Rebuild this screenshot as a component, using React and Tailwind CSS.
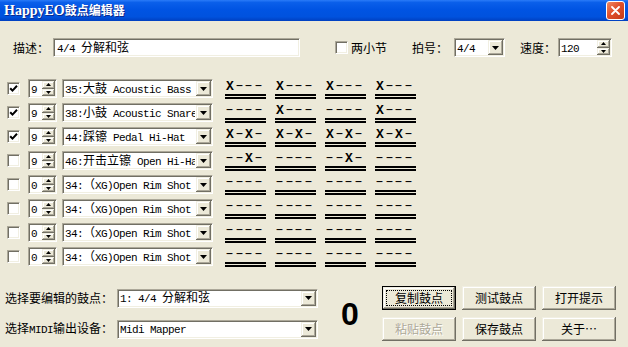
import React from "react";

const CJK_SPLIT = /([\u2000-\u206f\u3000-\u303f\u4e00-\u9fff\uff00-\uffef]+)/;
const CJK_TEST = /[\u2000-\u206f\u3000-\u303f\u4e00-\u9fff\uff00-\uffef]/;
const cjk = "font-['Noto_Sans_CJK_SC',sans-serif] text-[12px]";
const mono = "font-['Liberation_Mono',monospace] text-[11px] tracking-[-0.6px]";

const sunken =
  "bg-white border border-t-[#aca899] border-l-[#aca899] border-r-white border-b-white shadow-[inset_1px_1px_0_#716f64,inset_-1px_-1px_0_#f1efe2]";
const raised =
  "bg-[#ece9d8] shadow-[inset_-1px_-1px_0_#716f64,inset_1px_1px_0_#f1efe2,inset_-2px_-2px_0_#aca899,inset_2px_2px_0_#ffffff]";

function Mixed({ text }) {
  return (
    <span className="whitespace-pre">
      {text
        .split(CJK_SPLIT)
        .filter(Boolean)
        .map((s, i) =>
          CJK_TEST.test(s) ? (
            <span key={i} className={cjk}>
              {s}
            </span>
          ) : (
            <span key={i} className={mono}>
              {s}
            </span>
          )
        )}
    </span>
  );
}

function DownTri() {
  return (
    <svg width="7" height="4" viewBox="0 0 7 4">
      <path d="M0 0 H7 L3.5 4 Z" fill="black" />
    </svg>
  );
}
function UpTri() {
  return (
    <svg width="5" height="3" viewBox="0 0 5 3">
      <path d="M0 3 H5 L2.5 0 Z" fill="black" />
    </svg>
  );
}
function DnTri() {
  return (
    <svg width="5" height="3" viewBox="0 0 5 3">
      <path d="M0 0 H5 L2.5 3 Z" fill="black" />
    </svg>
  );
}

function Combo({ text, className }) {
  return (
    <div className={`${sunken} flex overflow-hidden ${className}`}>
      <div className="flex-1 min-w-0 overflow-hidden flex items-center pl-[2px] leading-none">
        <Mixed text={text} />
      </div>
      <div className={`${raised} w-[15px] m-[1px] flex items-center justify-center shrink-0`}>
        <DownTri />
      </div>
    </div>
  );
}

function Spin({ text, className }) {
  return (
    <div className={`${sunken} flex overflow-hidden ${className}`}>
      <div className="flex-1 min-w-0 overflow-hidden flex items-center pl-[2px] leading-none">
        <Mixed text={text} />
      </div>
      <div className="w-[13px] m-[1px] flex flex-col shrink-0">
        <div className={`${raised} flex-1 flex items-center justify-center`}>
          <UpTri />
        </div>
        <div className={`${raised} flex-1 flex items-center justify-center`}>
          <DnTri />
        </div>
      </div>
    </div>
  );
}

function Check({ checked }) {
  return (
    <div className={`${sunken} w-[13px] h-[13px] flex items-center justify-center`}>
      {checked && (
        <svg width="9" height="9" viewBox="0 0 9 9">
          <path d="M1.2 4.2 L3.5 6.6 L8 1.8" stroke="black" strokeWidth="2" fill="none" />
        </svg>
      )}
    </div>
  );
}

function Cell({ p }) {
  return (
    <div className="w-[41px] flex flex-col">
      <div className="h-[15px] flex font-['Liberation_Mono',monospace] text-[12px] leading-[15px] text-black">
        {p.split("").map((c, i) =>
          c === "X" ? (
            <span key={i} className="w-[9.6px] text-center font-bold text-[13px]">
              X
            </span>
          ) : (
            <span key={i} className="w-[9.6px] text-center">
              <span className="inline-block scale-x-[1.8]">-</span>
            </span>
          )
        )}
      </div>
      <div className="h-[2px] bg-black" />
      <div className="h-[1px]" />
      <div className="h-[2px] bg-black" />
    </div>
  );
}

function Btn({ label, def, disabled }) {
  if (def) {
    return (
      <div className="w-[74px] h-[24px] border border-black flex">
        <div className={`${raised} flex-1 flex p-[3px]`}>
          <div className="flex-1 border border-dotted border-black flex items-center justify-center">
            {label}
          </div>
        </div>
      </div>
    );
  }
  return (
    <div
      className={`${raised} w-[74px] h-[24px] flex items-center justify-center ${
        disabled ? "text-[#aca899] [text-shadow:1px_1px_0_#ffffff]" : ""
      }`}
    >
      {label}
    </div>
  );
}

const tracks = [
  { c: true, n: "9", name: "35:大鼓 Acoustic Bass" },
  { c: true, n: "9", name: "38:小鼓 Acoustic Snare" },
  { c: true, n: "9", name: "44:踩镲 Pedal Hi-Hat" },
  { c: false, n: "9", name: "46:开击立镲 Open Hi-Hat" },
  { c: false, n: "0", name: "34:（XG)Open Rim Shot" },
  { c: false, n: "0", name: "34:（XG)Open Rim Shot" },
  { c: false, n: "0", name: "34:（XG)Open Rim Shot" },
  { c: false, n: "0", name: "34:（XG)Open Rim Shot" },
];

const patterns = [
  ["X---", "X---", "X---", "X---"],
  ["----", "X---", "----", "X---"],
  ["X-X-", "X-X-", "X-X-", "X-X-"],
  ["--X-", "----", "--X-", "----"],
  ["----", "----", "----", "----"],
  ["----", "----", "----", "----"],
  ["----", "----", "----", "----"],
  ["----", "----", "----", "----"],
];

export default function App() {
  return (
    <div className="w-[628px] h-[347px] overflow-hidden bg-[#ece9d8] text-black font-['Noto_Sans_CJK_SC',sans-serif] text-[12px]">
      {/* Title bar */}
      <div className="h-[21px] flex items-center justify-between pl-[4px] pr-[3px] bg-[linear-gradient(to_bottom,#2a7bf8_0%,#0a5fea_12%,#0054e3_45%,#0052de_80%,#003fc0_100%)]">
        <div className="text-white font-bold whitespace-pre leading-none [text-shadow:1px_1px_0_#0b2a8c]">
          <span className="font-['Liberation_Serif',serif] text-[14px]">HappyEO</span>
          <span className="font-['Noto_Sans_CJK_SC',sans-serif] text-[12px]">鼓点编辑器</span>
        </div>
        <div className="w-[19px] h-[19px] rounded-[3px] border border-white bg-[linear-gradient(135deg,#f08a64_0%,#e0502c_45%,#c43a17_100%)] flex items-center justify-center">
          <svg width="9" height="9" viewBox="0 0 9 9">
            <path d="M1 1 L8 8 M8 1 L1 8" stroke="white" strokeWidth="1.8" strokeLinecap="round" />
          </svg>
        </div>
      </div>

      {/* Top row */}
      <div className="flex items-center h-[19px] mt-[17px]">
        <span className="ml-[13px] w-[40px]">描述：</span>
        <div className={`${sunken} w-[247px] h-[19px] flex items-center pl-[3px] leading-none`}>
          <Mixed text="4/4 分解和弦" />
        </div>
        <div className="ml-[35px]">
          <Check checked={false} />
        </div>
        <span className="ml-[3px] w-[61px]">两小节</span>
        <span className="w-[42px]">拍号：</span>
        <Combo text="4/4" className="w-[51px] h-[19px]" />
        <span className="ml-[15px] w-[38px]">速度：</span>
        <Spin text="120" className="w-[54px] h-[19px]" />
      </div>

      {/* Tracks */}
      <div className="mt-[22px] flex flex-col">
        {tracks.map((t, i) => (
          <div key={i} className="h-[24px] flex items-start">
            <div className="ml-[7px] mt-[3px]">
              <Check checked={t.c} />
            </div>
            <Spin text={t.n} className="ml-[8px] w-[29px] h-[19px]" />
            <Combo text={t.name} className="ml-[5px] w-[151px] h-[19px]" />
            <div className="ml-[12px] flex gap-[9px]">
              {patterns[i].map((p, j) => (
                <Cell key={j} p={p} />
              ))}
            </div>
          </div>
        ))}
      </div>

      {/* Bottom */}
      <div className="mt-[15px] flex">
        <div className="flex flex-col gap-[7px]">
          <div className="h-[24px] flex items-center">
            <span className="ml-[5px] w-[112px]">选择要编辑的鼓点：</span>
            <Combo text="1: 4/4 分解和弦" className="w-[201px] h-[19px]" />
          </div>
          <div className="h-[24px] flex items-center">
            <span className="ml-[5px] w-[112px] whitespace-pre">
              <Mixed text="选择MIDI输出设备：" />
            </span>
            <Combo text="Midi Mapper" className="w-[201px] h-[19px]" />
          </div>
        </div>
        <div className="w-[64px] flex items-center justify-center font-['Liberation_Sans',sans-serif] font-bold text-[32px] leading-none">
          0
        </div>
        <div className="grid grid-cols-[74px_74px_74px] gap-x-[6px] gap-y-[7px]">
          <Btn label="复制鼓点" def />
          <Btn label="测试鼓点" />
          <Btn label="打开提示" />
          <Btn label="粘贴鼓点" disabled />
          <Btn label="保存鼓点" />
          <Btn label="关于…" />
        </div>
      </div>
    </div>
  );
}
